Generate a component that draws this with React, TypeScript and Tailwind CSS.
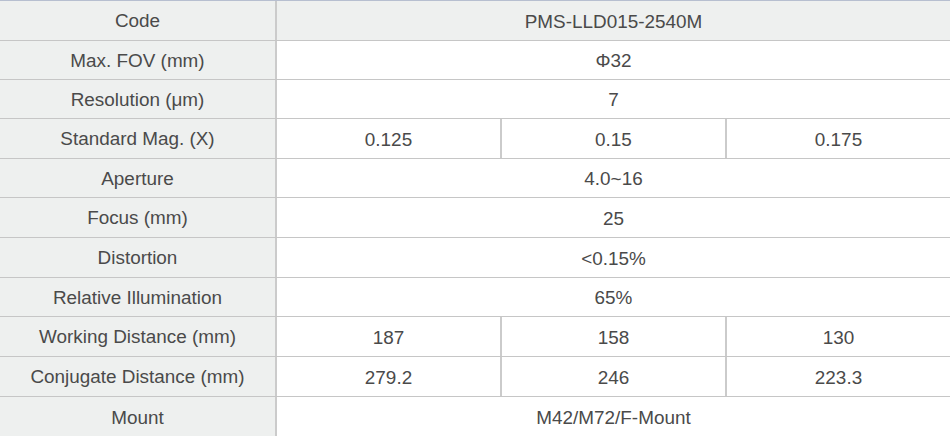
import React from "react";

type Row = { label: string; values: string[]; h: string; header?: boolean };

const rows: Row[] = [
  { label: "Code", values: ["PMS-LLD015-2540M"], h: "h-[40px]", header: true },
  { label: "Max. FOV (mm)", values: ["Φ32"], h: "h-[39px]" },
  { label: "Resolution (μm)", values: ["7"], h: "h-[39px]" },
  { label: "Standard Mag. (X)", values: ["0.125", "0.15", "0.175"], h: "h-[40px]" },
  { label: "Aperture", values: ["4.0~16"], h: "h-[39px]" },
  { label: "Focus (mm)", values: ["25"], h: "h-[40px]" },
  { label: "Distortion", values: ["<0.15%"], h: "h-[40px]" },
  { label: "Relative Illumination", values: ["65%"], h: "h-[39px]" },
  { label: "Working Distance (mm)", values: ["187", "158", "130"], h: "h-[40px]" },
  { label: "Conjugate Distance (mm)", values: ["279.2", "246", "223.3"], h: "h-[40px]" },
  { label: "Mount", values: ["M42/M72/F-Mount"], h: "h-[40px]" },
];

export default function App() {
  return (
    <div
      className="w-[950px] h-[436px] overflow-hidden bg-white text-[#4a4a4a] text-[18.9px] leading-none"
      style={{ fontFamily: '"Liberation Sans", Arial, sans-serif' }}
    >
      <div className="border-t border-[#b7bfd0]">
        {rows.map((r, i) => (
          <div
            key={i}
            className={`flex ${r.h} ${i < rows.length - 1 ? "border-b border-[#c6c6c6]" : ""} ${
              r.header ? "bg-[#eef0ef]" : ""
            }`}
          >
            <div className="w-[277px] shrink-0 bg-[#eef0ef] border-r-2 border-[#cbcbcb] flex items-center justify-center pt-[2px]">
              {r.label}
            </div>
            {r.values.length === 1 ? (
              <div className="flex-1 flex items-center justify-center pt-[3px]">{r.values[0]}</div>
            ) : (
              r.values.map((v, j) => (
                <div
                  key={j}
                  className={`${j < 2 ? "w-[225px] border-r-2 border-[#cbcbcb]" : "flex-1"} flex items-center justify-center pt-[4px]`}
                >
                  {v}
                </div>
              ))
            )}
          </div>
        ))}
      </div>
    </div>
  );
}
